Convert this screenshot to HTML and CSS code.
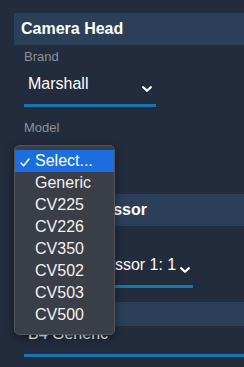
FILE: index.html
```html
<!DOCTYPE html>
<html lang="en">
<head>
  <meta charset="UTF-8">
  <title>Camera Settings</title>
  <link rel="stylesheet" href="styles.css">
</head>
<body>

  <div class="panel">
    <div class="section-head">Camera Head</div>

    <div class="field">
      <div class="label">Brand</div>
      <div class="select w-brand">
        <span>Marshall</span>
        <svg class="chev" width="10" height="6" viewBox="0 0 10 6"><polyline points="1.2,1.2 5,4.8 8.8,1.2"/></svg>
      </div>
    </div>

    <div class="field has-menu">
      <div class="label">Model</div>
      <div class="select w-model">
        <span>Select...</span>
        <svg class="chev" width="10" height="6" viewBox="0 0 10 6"><polyline points="1.2,1.2 5,4.8 8.8,1.2"/></svg>
      </div>

      <ul class="menu">
        <li class="selected">
          <svg class="check" width="10" height="9" viewBox="0 0 10 9"><polyline points="1,5 3.6,7.8 9,1"/></svg>
          Select...
        </li>
        <li>Generic</li>
        <li>CV225</li>
        <li>CV226</li>
        <li>CV350</li>
        <li>CV502</li>
        <li>CV503</li>
        <li>CV500</li>
      </ul>
    </div>

    <div class="section-head">Video Processor</div>

    <div class="field">
      <div class="label">Processor</div>
      <div class="select w-proc">
        <span>Video Processor 1: 1</span>
        <svg class="chev" width="10" height="6" viewBox="0 0 10 6"><polyline points="1.2,1.2 5,4.8 8.8,1.2"/></svg>
      </div>
    </div>

    <div class="section-head small">Lens</div>

    <div class="field bare">
      <div class="select w-lens">
        <span>B4 Generic</span>
      </div>
    </div>
  </div>

</body>
</html>
```

FILE: styles.css
```css
body {
  margin: 0;
  height: 367px;
  overflow: hidden;
  background: #222c3d;
  color: #fff;
  font-family: "Liberation Sans", Arial, sans-serif;
}

.panel {
  padding: 6px 0 0 14px;
}

.section-head {
  margin-top: 7px;
  height: 32px;
  line-height: 32px;
  padding-left: 7px;
  background: #2b3f58;
  font-size: 16px;
  font-weight: bold;
}

.section-head.small {
  margin-top: 5px;
  height: 24px;
  line-height: 24px;
}

.field {
  padding: 4px 0 9px 10px;
}

.field.has-menu {
  position: relative;
}

.field.bare {
  padding-top: 0;
  margin-top: -2px;
}

.label {
  font-size: 13px;
  line-height: 15px;
  color: #8b929d;
  margin-bottom: 10px;
}

.select {
  display: flex;
  align-items: center;
  justify-content: space-between;
  box-sizing: border-box;
  padding: 0 4px 10px 4px;
  border-bottom: 3px solid #1478b0;
  font-size: 16px;
  line-height: 20px;
  white-space: nowrap;
}

.w-brand { width: 132px; }
.w-model { width: 88px; }
.w-proc { width: 169px; padding-right: 3px; }
.w-lens { width: 240px; }

.chev {
  margin-top: 9px;
  fill: none;
  stroke: #fff;
  stroke-width: 2.2;
  stroke-linecap: round;
  stroke-linejoin: round;
}

.menu {
  position: absolute;
  top: 29px;
  left: 0;
  width: 101px;
  box-sizing: border-box;
  margin: 0;
  padding: 4px 0 8px;
  list-style: none;
  background: #3a3e46;
  border: 1px solid #51565e;
  border-radius: 5px;
  box-shadow: 0 2px 8px rgba(0, 0, 0, 0.45);
  font-size: 16px;
  line-height: 22px;
}

.menu li {
  position: relative;
  padding-left: 20px;
  color: #f2f2f2;
}

.menu li.selected {
  background: #1c6ee0;
  color: #fff;
}

.check {
  position: absolute;
  left: 5px;
  top: 8px;
  fill: none;
  stroke: #fff;
  stroke-width: 1.5;
  stroke-linecap: round;
  stroke-linejoin: round;
}
```
